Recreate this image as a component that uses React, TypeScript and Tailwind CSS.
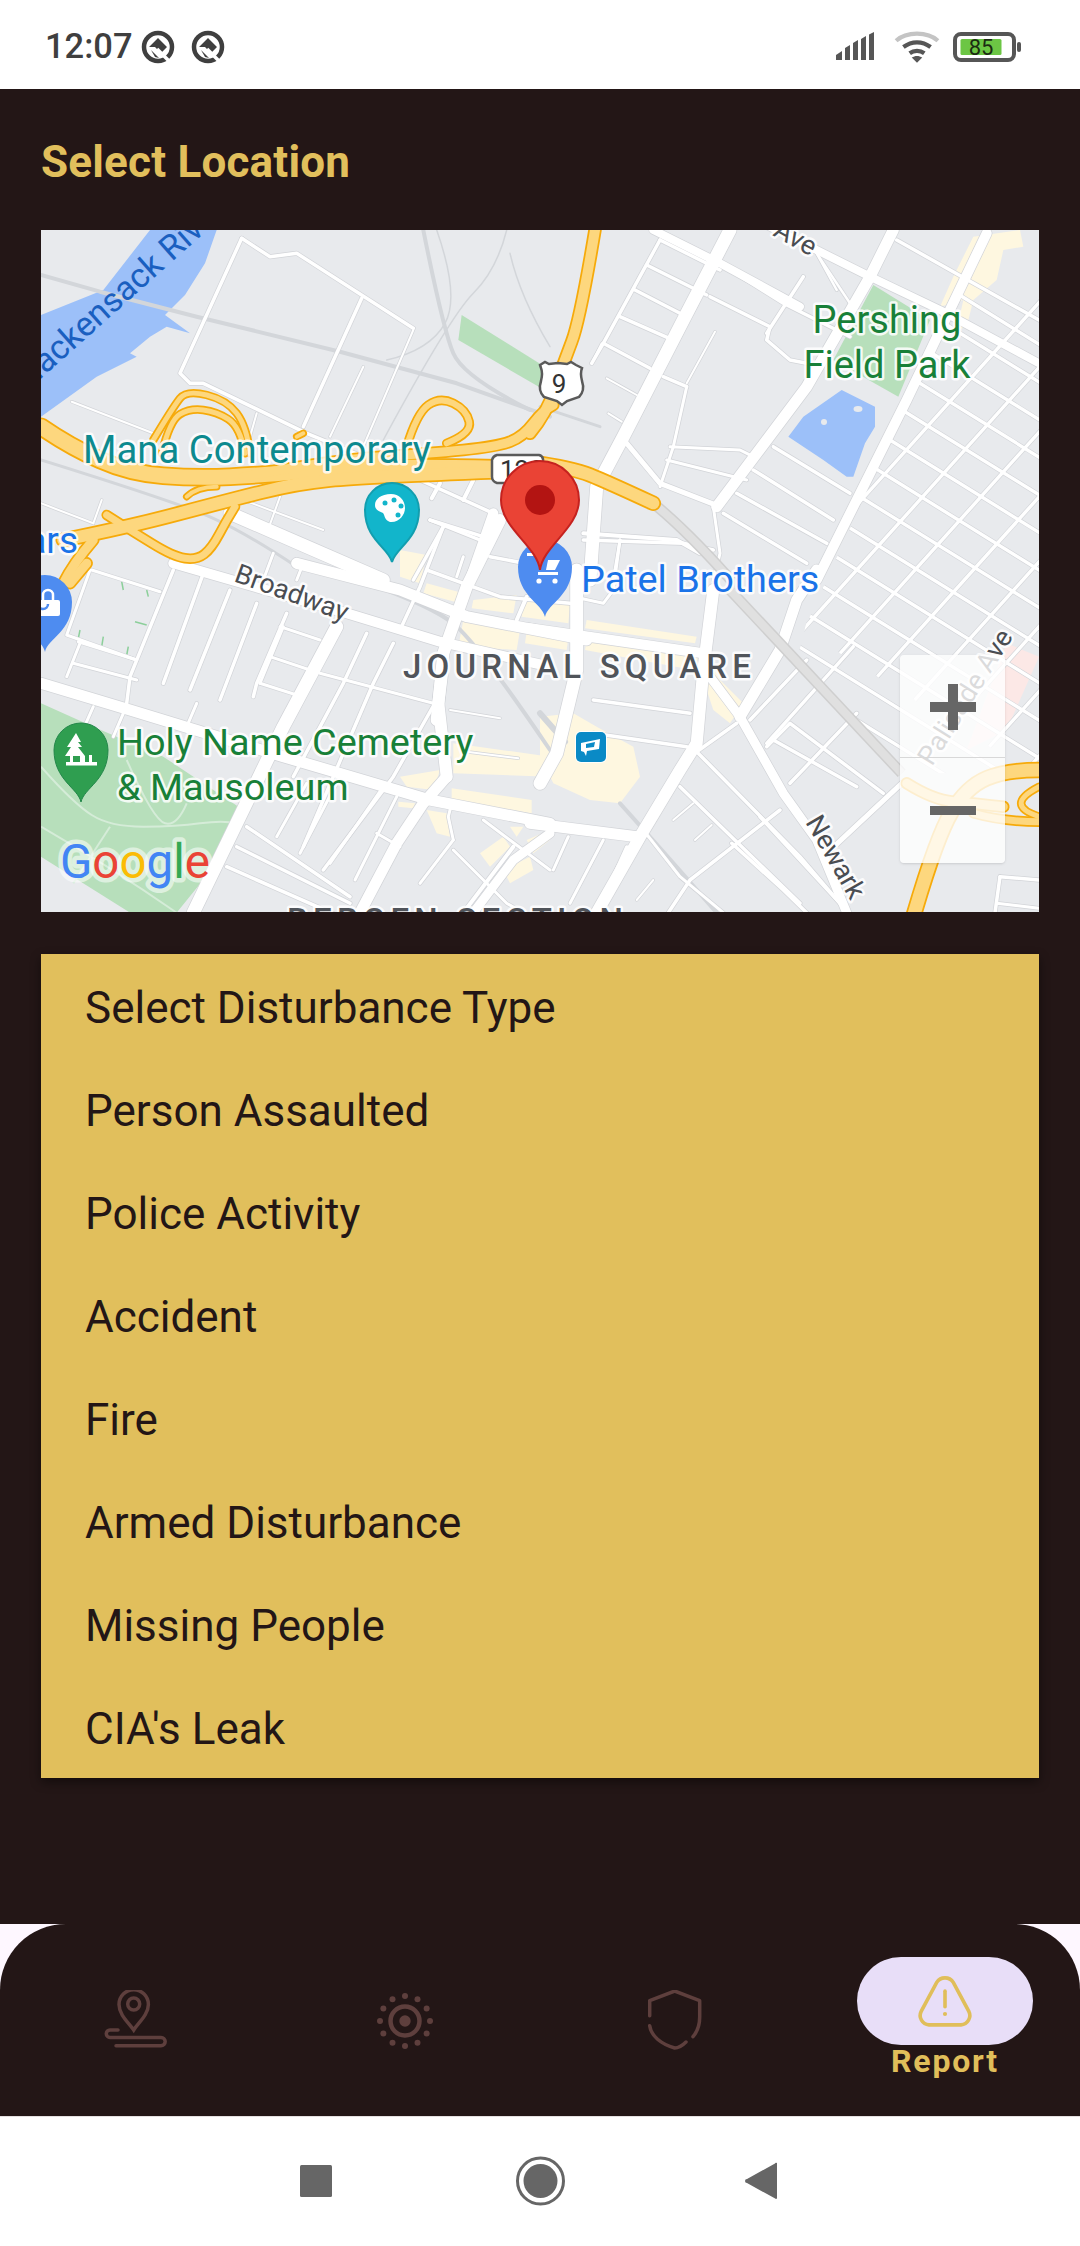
import React from "react";

type Crop = 2 | 3 | 4 | 5 | 7;
const O: Record<Crop, [number, number]> = { 2: [30, 220], 3: [540, 220], 4: [30, 570], 5: [540, 570], 7: [400, 420] };
const map = (c: Crop, a: number[]) => {
  const out: [number, number][] = [];
  for (let i = 0; i < a.length; i += 2) out.push([O[c][0] + a[i] / 3, O[c][1] + a[i + 1] / 3]);
  return out;
};
const L = (c: Crop, a: number[]) => map(c, a).map((p, i) => `${i ? "L" : "M"}${p[0].toFixed(1)} ${p[1].toFixed(1)}`).join("");
const S = (c: Crop, a: number[]) => {
  const p = map(c, a);
  if (p.length < 3) return L(c, a);
  let d = `M${p[0][0].toFixed(1)} ${p[0][1].toFixed(1)}`;
  for (let i = 1; i < p.length - 1; i++) {
    const e = i === p.length - 2 ? p[i + 1] : [(p[i][0] + p[i + 1][0]) / 2, (p[i][1] + p[i + 1][1]) / 2];
    d += `Q${p[i][0].toFixed(1)} ${p[i][1].toFixed(1)} ${e[0].toFixed(1)} ${e[1].toFixed(1)}`;
  }
  return d;
};
const Poly = (c: Crop, a: number[]) => map(c, a).map((p) => p.join(",")).join(" ");

const streets: [Crop, number, number[]][] = [
  // crop 2
  [2, 3.5, [635, 55, 720, 110, 800, 100, 1150, 325]],
  [2, 3.5, [635, 55, 450, 460, 480, 490, 520, 490, 830, 640, 1170, 780, 1390, 880]],
  [2, 3.5, [995, 235, 820, 620]],
  [2, 2, [125, 545, 370, 640]],
  [2, 2, [1000, 440, 900, 650]],
  [2, 2, [1150, 330, 1000, 680]],
  [2, 2, [33, 850, 190, 910]],
  [2, 2, [215, 840, 190, 910]],
  [2, 2, [680, 580, 660, 650]],
  [2, 2, [880, 930, 640, 840]],
  [2, 2, [750, 830, 710, 940]],
  [2, 13, [600, 880, 830, 980, 1060, 1080]],
  [2, 10, [1390, 880, 1320, 1080]],
  [2, 3.5, [1200, 900, 1350, 960]],
  [2, 3.5, [1240, 920, 1150, 1080]],
  [2, 4, [1230, 790, 1205, 835]],
  [2, 4, [1330, 780, 1300, 840]],
  [2, 3, [730, 1000, 700, 1080]],
  [2, 3, [820, 1030, 800, 1080]],
  // crop 3
  [3, 13, [150, 1080, 170, 800, 250, 650, 430, 300, 570, 30]],
  [3, 11, [530, 860, 800, 500, 990, 170, 1060, 30]],
  [3, 10, [830, 1080, 1100, 540, 1340, 40]],
  [3, 3.5, [360, 60, 540, 150]],
  [3, 3.5, [320, 135, 500, 225]],
  [3, 3.5, [285, 210, 430, 285]],
  [3, 3.5, [240, 290, 410, 365]],
  [3, 3.5, [190, 370, 330, 445]],
  [3, 3.5, [360, 60, 190, 370, 155, 430]],
  [3, 3.5, [510, 230, 690, 320, 680, 360, 750, 420, 800, 430]],
  [3, 3.5, [790, 170, 680, 340]],
  [3, 3.5, [555, 140, 730, 250, 930, 350]],
  [3, 8, [340, 30, 540, 130, 780, 260]],
  [3, 8, [650, 0, 990, 170, 1200, 270, 1497, 430]],
  [3, 2.5, [830, 100, 930, 250]],
  [3, 2.5, [830, 100, 890, 210]],
  [3, 3.5, [1070, 60, 1497, 300]],
  [3, 3.5, [370, 470, 440, 500]],
  [3, 3, [440, 500, 400, 680, 360, 800]],
  [3, 5, [260, 670, 360, 790, 540, 860]],
  [3, 3, [390, 680, 600, 690, 640, 710]],
  [3, 3, [380, 720, 620, 780]],
  [3, 2, [200, 475, 290, 525]],
  [3, 2, [205, 580, 245, 605]],
  [3, 2, [525, 335, 440, 490]],
  [3, 2, [155, 430, 185, 370]],
  [3, 3.5, [700, 680, 930, 820]],
  [3, 3.5, [640, 750, 880, 900]],
  [3, 3.5, [590, 820, 860, 970]],
  [3, 3.5, [550, 880, 800, 1030]],
  [3, 3.5, [130, 960, 430, 970, 520, 990]],
  [3, 3, [240, 960, 220, 1080]],
  [3, 3, [520, 860, 540, 1000, 520, 1080]],
  // crop 4
  [4, 11, [33, 340, 300, 420, 760, 560, 1200, 690, 1560, 760]],
  [4, 10, [430, -20, 950, 130, 1230, 215, 1560, 290]],
  [4, 11, [800, -20, 1110, 60, 1310, 140, 1670, 210]],
  [4, 13, [920, 170, 760, 470, 490, 1028]],
  [4, 3.5, [430, 0, 300, 320, 290, 400]],
  [4, 3.5, [520, 10, 400, 340]],
  [4, 3.5, [600, 60, 480, 360]],
  [4, 3.5, [680, 100, 570, 390]],
  [4, 3.5, [770, 130, 680, 340, 670, 380]],
  [4, 3.5, [1010, 190, 940, 340, 790, 620]],
  [4, 3.5, [1090, 220, 1030, 340, 820, 830]],
  [4, 3.5, [1220, 390, 1090, 620, 880, 900]],
  [4, 3, [180, 0, 110, 195, 320, 270]],
  [4, 3, [185, 0, 390, 65]],
  [4, 3, [145, 215, 320, 270]],
  [4, 3, [110, 320, 150, 220]],
  [4, 3, [130, 280, 320, 330]],
  [4, 3, [750, 170, 870, 210]],
  [4, 3, [720, 260, 840, 300]],
  [4, 3, [690, 340, 800, 375]],
  [4, 3, [870, 310, 1210, 400]],
  [4, 3, [760, 170, 690, 340]],
  [4, 3, [190, 410, 150, 500]],
  [4, 3, [500, 400, 470, 470]],
  [4, 3, [280, 430, 250, 500]],
  [4, 2, [1260, 420, 1410, 445]],
  [4, 2, [1310, 545, 1465, 565]],
  [4, 3.5, [650, 770, 960, 980]],
  [4, 3.5, [620, 830, 960, 1000]],
  [4, 3.5, [590, 890, 930, 1040]],
  [4, 3, [740, 800, 830, 640]],
  [4, 3, [810, 850, 930, 620]],
  [4, 3, [900, 880, 1060, 650]],
  [4, 3, [975, 930, 1100, 680]],
  [4, 3, [1040, 790, 1110, 830]],
  [4, 12, [1240, 280, 1225, 400, 1250, 620]],
  [4, 11, [1250, 620, 1180, 700, 1100, 820, 990, 1028]],
  [4, 3, [1265, 700, 1255, 740, 1270, 810]],
  [4, 3, [1270, 810, 1170, 940]],
  [4, 3, [1270, 840, 1430, 1000, 1480, 1028]],
  [4, 3, [1360, 750, 1560, 900]],
  [4, 4, [1450, 830, 1300, 1028]],
  [4, 9, [1560, 790, 1450, 870, 1330, 1028]],
  // crop 7
  [7, 12, [300, 300, 200, 500, 130, 700, 110, 900]],
  [7, 3.5, [130, 320, 60, 500, 0, 630]],
  [7, 3.5, [90, 300, 250, 350]],
  [7, 3.5, [80, 450, 300, 530, 510, 550]],
  [7, 3.5, [270, 410, 530, 460]],
  [7, 3, [190, 410, 170, 470]],
  [7, 4, [380, 530, 350, 600]],
  [7, 4, [550, 340, 830, 360, 900, 400]],
  [7, 3, [660, 360, 640, 510, 610, 550, 520, 530]],
  // crop 5
  [5, 12, [520, 60, 490, 300, 470, 520, 420, 600, 300, 800, 170, 1028]],
  [5, 13, [110, 0, 110, 300, 50, 550, 0, 640]],
  [5, 10, [-30, 175, 490, 250]],
  [5, 11, [-30, 760, 290, 800]],
  [5, 9, [510, 320, 600, 440, 730, 670, 830, 810, 920, 1028]],
  [5, 11, [830, 0, 770, 90, 720, 240, 600, 440]],
  [5, 3.5, [590, 460, 470, 545]],
  [5, 3.5, [160, 390, 450, 430]],
  [5, 3.5, [160, 490, 440, 530]],
  [5, 3.5, [470, 545, 780, 860, 900, 1000]],
  [5, 3.5, [420, 650, 780, 1000]],
  [5, 3.5, [680, 530, 750, 460, 1030, 670]],
  [5, 3.5, [630, 450, 800, 270]],
  [5, 3.5, [680, 520, 940, 230]],
  [5, 3.5, [750, 640, 950, 430]],
  [5, 3.5, [700, 510, 950, 650]],
  [5, 5, [860, 850, 1085, 640]],
  [5, 3, [85, 800, 40, 900]],
  [5, 3, [190, 810, 90, 1000]],
  [5, 3, [260, 830, 170, 1028]],
  [5, 2, [400, 750, 460, 700]],
  [5, 2, [465, 810, 515, 765]],
  [5, 2, [290, 990, 340, 930]],
  [5, 3, [310, 780, 420, 920, 550, 1028]],
  [5, 3.5, [385, 1028, 450, 930, 720, 720]],
  [5, 3.5, [575, 820, 730, 960, 800, 1028]],
  [5, 3.5, [660, 740, 900, 1000]],
  [5, 3.5, [1380, 920, 1497, 930]],
  [5, 3.5, [1380, 920, 1365, 1028]],
  [5, 3, [1370, 1000, 1497, 1015]],
];

const eastA: number[][] = [];
for (let k = 0; k < 19; k++) {
  const x = 1250 - k * 40;
  const y = 220 + k * 88;
  eastA.push([x, y, x + 1000, y + 620]);
}
const eastB: number[][] = [];
for (let k = -2; k < 12; k++) {
  const x = 900 + k * 112;
  const y = 1300 + k * 70;
  eastB.push([x, y, x + 900, y - 1000]);
}

const highways: [Crop, number, number[]][] = [
  [2, 15, [33, 620, 120, 680, 300, 760, 500, 775, 700, 765, 900, 745, 1200, 740, 1400, 745]],
  [2, 12, [100, 960, 300, 920, 600, 840, 800, 790, 1000, 770, 1400, 755]],
  [2, 9, [640, 770, 900, 720, 1200, 700, 1400, 680, 1480, 650, 1540, 570, 1570, 555]],
  [2, 5, [395, 700, 420, 600, 480, 565, 560, 575, 630, 620, 645, 700]],
  [2, 5, [370, 660, 430, 560, 470, 510, 590, 540, 650, 620, 660, 700]],
  [2, 6, [1130, 680, 1160, 580, 1230, 530, 1310, 570, 1325, 640, 1250, 670]],
  [3, 10, [165, 30, 120, 300, 70, 430, 20, 580, -30, 640]],
  [3, 12, [-30, 725, 100, 745, 200, 785, 340, 850]],
  [2, 7, [615, 860, 590, 900, 545, 985, 500, 1020, 430, 1010, 300, 930, 230, 885]],
  [2, 9, [190, 960, 130, 1030, 100, 1090]],
  [4, 9, [170, -20, 120, 40]],
  [2, 4, [470, 830, 500, 800, 560, 800]],
  [2, 4, [800, 650, 820, 640]],
  [5, 13, [1497, 600, 1400, 600, 1280, 650, 1190, 800, 1120, 1040]],
  [5, 5, [1497, 650, 1390, 705, 1497, 740]],
  [5, 7, [1497, 755, 1390, 755, 1300, 730]],
  [5, 9, [1100, 640, 1180, 690, 1300, 700, 1390, 710]],
];

const beige: [Crop, number[]][] = [
  [7, [0, 390, 80, 405, 60, 490, 0, 470]],
  [7, [80, 490, 190, 520, 180, 550, 70, 520]],
  [7, [220, 540, 350, 525, 340, 580, 215, 565]],
  [7, [370, 535, 510, 555, 505, 610, 365, 590]],
  [7, [190, 600, 360, 630, 350, 690, 175, 680]],
  [7, [380, 635, 505, 655, 500, 690, 375, 670]],
  [7, [560, 600, 890, 650, 885, 670, 555, 625]],
  [7, [560, 665, 900, 700, 880, 750, 555, 690]],
  [4, [1270, 520, 1560, 560, 1560, 620, 1270, 610]],
  [4, [1110, 620, 1230, 600, 1210, 660, 1130, 650]],
  [4, [1265, 655, 1505, 690, 1505, 730, 1265, 690]],
  [4, [1190, 720, 1250, 730, 1260, 800, 1220, 790]],
  [4, [1350, 850, 1420, 800, 1440, 830, 1380, 890]],
  [4, [1420, 900, 1500, 860, 1510, 900, 1440, 940]],
  [4, [1490, 810, 1560, 780, 1560, 810, 1510, 850]],
  [4, [1440, 770, 1480, 770, 1460, 800]],
  [4, [1105, 695, 1155, 700, 1150, 715, 1105, 710]],
  [5, [0, 440, 100, 430, 170, 470, 280, 530, 300, 620, 240, 700, 150, 690, 40, 640, 0, 560]],
  [5, [500, 230, 540, 330, 610, 400, 570, 460, 520, 420, 490, 330]],
  [3, [1300, 50, 1440, 30, 1450, 80, 1390, 90, 1370, 180, 1300, 240, 1280, 320, 1250, 330, 1270, 240, 1200, 260, 1240, 170]],
];

const ticks: number[][] = [
  [275, 35, 280, 60],
  [350, 60, 355, 80],
  [150, 180, 145, 205],
  [220, 200, 215, 230],
  [295, 230, 290, 255],
  [315, 155, 350, 165],
];

const roadPaths = streets.map(([c, w, a]) => ({ d: L(c, a), w }));

function GMap() {
  return (
    <svg viewBox="41 230 998 682" className="block w-full h-full">
      <defs>
        <clipPath id="east">
          <polygon points={Poly(3, [1340, 40, 1497, 40, 1497, 1660, 1085, 1660, 770, 1324, 830, 1080])} />
        </clipPath>
      </defs>
      <rect x="41" y="230" width="998" height="682" fill="#e8eaed" />
      <polygon points={Poly(2, [360, 30, 560, 30, 525, 130, 465, 225, 405, 285, 480, 340, 410, 320, 360, 350, 300, 400, 320, 410, 200, 470, 33, 590, 33, 285, 220, 210])} fill="#9cc0f9" />
      <polygon points={Poly(3, [905, 510, 1005, 560, 1005, 620, 975, 670, 940, 770, 920, 770, 850, 720, 745, 650, 790, 590])} fill="#9cc0f9" />
      <circle cx="824" cy="422" r="3" fill="#e8eaed" />
      <ellipse cx="858" cy="409" rx="4.5" ry="3" fill="#e8eaed" />
      <polygon points={Poly(2, [1295, 285, 1560, 450, 1560, 520, 1285, 360])} fill="#b7dfbb" />
      <polygon points={Poly(3, [1000, 195, 1170, 300, 1075, 530, 880, 420])} fill="#b7dfbb" />
      <polygon points={Poly(4, [33, 400, 190, 470, 400, 560, 640, 720, 560, 880, 440, 1028, 300, 1028, 33, 860])} fill="#b7dfbb" />
      <polygon points={Poly(5, [1400, 220, 1497, 260, 1400, 480, 1280, 540])} fill="#fce8e6" />
      {beige.map(([c, a], i) => (
        <polygon key={i} points={Poly(c, a)} fill="#fef7e0" />
      ))}
      <g stroke="#8ccf9a" strokeWidth="1.5">
        {ticks.map((t, i) => (
          <path key={i} d={L(4, t)} />
        ))}
      </g>

      {/* cemetery paths */}
      <g fill="none" stroke="#d5ecd8" strokeWidth="2">
        <path d={S(4, [33, 590, 130, 700, 240, 770, 440, 770, 580, 750, 620, 760])} />
        <path d={S(4, [33, 770, 240, 890, 440, 1028])} />
        <path d={S(4, [240, 770, 130, 940])} />
        <path d={S(4, [290, 570, 370, 750, 440, 770, 470, 700])} />
      </g>

      {/* rail and grey lines */}
      <g fill="none" stroke="#d3d6da" strokeLinecap="round" strokeLinejoin="round">
        <path d={L(2, [33, 165, 210, 215, 500, 290, 930, 395, 1280, 490, 1560, 590])} strokeWidth="4" />
        <path d={S(2, [1180, 30, 1240, 330, 1300, 470, 1500, 570])} strokeWidth="4" />
        <path d={S(2, [1430, 30, 1400, 150, 1260, 290, 1060, 660])} strokeWidth="1.5" />
        <path d={S(2, [1220, 30, 1290, 230, 1200, 390, 1070, 420])} strokeWidth="1.5" />
        <path d={S(2, [1440, 100, 1470, 230, 1560, 380])} strokeWidth="1.5" />
        <path d={S(2, [33, 720, 450, 850, 650, 940, 800, 1040])} strokeWidth="3" />
        <path d={S(4, [900, 0, 1200, 100, 1350, 230, 1560, 540])} strokeWidth="4" />
        <path d={S(5, [240, 700, 420, 900, 540, 1040])} strokeWidth="4" />
        <path d={S(5, [0, 430, 75, 515])} strokeWidth="6" />
        <path d={L(3, [0, 560, 180, 620])} strokeWidth="3" />
      </g>

      {/* roads: casing then fill */}
      <g clipPath="url(#east)" fill="none" stroke="#d2d4d8" strokeWidth="4.6">
        {eastA.concat(eastB).map((a, i) => (
          <path key={i} d={L(3, a)} />
        ))}
      </g>
      <g fill="none" stroke="#d2d4d8" strokeLinecap="round" strokeLinejoin="round">
        {roadPaths.map((r, i) => (
          <path key={i} d={r.d} strokeWidth={r.w + 1.4} />
        ))}
      </g>
      <g clipPath="url(#east)" fill="none" stroke="#ffffff" strokeWidth="3.4">
        {eastA.concat(eastB).map((a, i) => (
          <path key={i} d={L(3, a)} />
        ))}
      </g>
      <g fill="none" stroke="#ffffff" strokeLinecap="round" strokeLinejoin="round">
        {roadPaths.map((r, i) => (
          <path key={i} d={r.d} strokeWidth={r.w} />
        ))}
      </g>

      {/* grey elevated line */}
      <g fill="none" strokeLinecap="butt" strokeLinejoin="round">
        <path d={S(3, [340, 850, 450, 940, 590, 1100])} stroke="#cfcfcf" strokeWidth="11" />
        <path d={L(5, [570, 60, 1085, 610])} stroke="#cfcfcf" strokeWidth="11" />
        <path d={S(3, [340, 850, 450, 940, 590, 1100])} stroke="#e0e0e0" strokeWidth="8" />
        <path d={L(5, [570, 60, 1085, 610])} stroke="#e0e0e0" strokeWidth="8" />
      </g>

      {/* highways */}
      <g fill="none" stroke="#f6aa0a" strokeLinecap="round" strokeLinejoin="round">
        {highways.map(([c, w, a], i) => (
          <path key={i} d={S(c, a)} strokeWidth={w + 3.5} />
        ))}
      </g>
      <g fill="none" stroke="#fdd77e" strokeLinecap="round" strokeLinejoin="round">
        {highways.map(([c, w, a], i) => (
          <path key={i} d={S(c, a)} strokeWidth={w} />
        ))}
      </g>

      {/* labels */}
      <g paintOrder="stroke" stroke="#ffffff" strokeOpacity="0.85" strokeWidth="5" strokeLinejoin="round">
        <text transform="rotate(-41.7 45 375)" x="21" y="375" fontSize="34" fill="#1a5fc0" stroke="none">Hackensack River</text>
        <text x="83" y="463" fontSize="38.3" fill="#0d8a8f">Mana Contemporary</text>
        <text x="78" y="553" textAnchor="end" fontSize="37" fill="#1a73e8">ars</text>
        <text x="887" y="333" textAnchor="middle" fontSize="38" fill="#188038">Pershing</text>
        <text x="887" y="378" textAnchor="middle" fontSize="38" fill="#188038">Field Park</text>
        <text x="117" y="755" fontSize="37.8" fill="#188038">Holy Name Cemetery</text>
        <text x="117" y="800" fontSize="37.8" fill="#188038">&amp; Mausoleum</text>
        <text x="581" y="592" fontSize="37.8" fill="#1a73e8">Patel Brothers</text>
        <text x="403" y="678" fontSize="33" fontWeight="500" letterSpacing="5.2" fill="#50545a">JOURNAL SQUARE</text>
        <text x="287" y="932" fontSize="33" fontWeight="500" letterSpacing="5.2" fill="#50545a">BERGEN SECTION</text>
        <text transform="rotate(20 233 581)" x="233" y="581" fontSize="27" fill="#4a4d52">Broadway</text>
        <text transform="rotate(29 772 235)" x="772" y="235" fontSize="27" fill="#4a4d52">Ave</text>
        <text transform="rotate(-58 932 767)" x="932" y="767" fontSize="27" fill="#4a4d52">Palisade Ave</text>
        <text transform="rotate(60 805 822)" x="805" y="822" fontSize="27" fill="#4a4d52">Newark</text>
      </g>

      {/* shields */}
      <path d="M497 455h42a5 5 0 0 1 4 4v18a6 6 0 0 1-5 6h-41a7 7 0 0 1-5-7v-16a7 7 0 0 1 5-5z" fill="#fff" stroke="#5a5a5a" strokeWidth="2.5" />
      <text x="500" y="479" fontSize="26" fill="#333">120</text>
      <path d="M540 365l5-3 4 2 9-1 9 1 4-2 5 3 6 3c-2 5-1 9 0 13 2 6 1 12-3 16l-12 4-5 4-5-4-13-4c-4-4-5-10-3-16 1-4 2-8 0-13z" fill="#fff" stroke="#5a5a5a" strokeWidth="2.5" />
      <text x="559" y="393" textAnchor="middle" fontSize="26" fill="#333">9</text>

      {/* teal pin */}
      <path d="M392 562c-3-14-27-22-27-52a27 27 0 0 1 54 0c0 30-24 38-27 52z" fill="#12b5cb" stroke="#129eaf" strokeWidth="2" />
      <path d="M391 494c-10 0-16 5-16 11 0 5 4 6 8 8 2 2 1 7 7 9 9 1 15-7 15-14 0-8-6-14-14-14z" fill="#fff" />
      <circle cx="385" cy="503" r="2.5" fill="#12b5cb" />
      <circle cx="394" cy="500" r="2.5" fill="#12b5cb" />
      <circle cx="401" cy="506" r="2.5" fill="#12b5cb" />
      <circle cx="398" cy="515" r="2.5" fill="#12b5cb" />

      {/* blue left pin */}
      <path d="M45 652c-3-14-27-20-27-50a27 27 0 0 1 54 0c0 30-24 36-27 50z" fill="#4e8cf0" />
      <rect x="38" y="600" width="22" height="16" rx="2" fill="#fff" />
      <path d="M43 600v-5a5 5 0 0 1 10 0v5" fill="none" stroke="#fff" strokeWidth="2.5" />
      <path d="M38 604a5 5 0 0 0 10 0" fill="none" stroke="#4e8cf0" strokeWidth="2.5" />

      {/* green pin */}
      <path d="M81 802c-3-14-27-22-27-52a27 27 0 0 1 54 0c0 30-24 38-27 52z" fill="#2f9e50" stroke="#23874a" strokeWidth="1" />
      <path d="M76 733l-9 14h4l-6 9h7l0 0h8v6h5v-6h0l-7-9h4l-4-5 3-0z" fill="#fff" />
      <rect x="66" y="762" width="31" height="3.5" fill="#fff" />
      <rect x="70" y="756" width="3" height="7" fill="#fff" />
      <rect x="89" y="755" width="3" height="8" fill="#fff" />

      {/* transit */}
      <rect x="575" y="731" width="32" height="32" rx="6" fill="#fff" opacity="0.9" />
      <rect x="576" y="732" width="30" height="30" rx="5" fill="#0a8ac6" />
      <path d="M581 743l19-4-1 10-12 2-1 5-2-4-3-1z" fill="#fff" />
      <path d="M586 744l9-2-1 5-8 1z" fill="#0a8ac6" />

      {/* blue store pin */}
      <path d="M545 617c-3-14-27-21-27-50a27 27 0 0 1 54 0c0 29-24 36-27 50z" fill="#4e8cf0" />
      <polygon points="548,560 560,560 555,570 546,570" fill="#fff" />
      <rect x="538" y="572" width="20" height="3" fill="#fff" />
      <circle cx="539" cy="581" r="2.6" fill="#fff" />
      <circle cx="555" cy="581" r="2.6" fill="#fff" />
      <rect x="527" y="553" width="11" height="3" fill="#fff" />

      {/* red pin */}
      <path d="M540 570c-3-24-39-42-39-70a39 39 0 0 1 78 0c0 28-36 46-39 70z" fill="#ea4335" stroke="#c5221f" strokeWidth="2" />
      <circle cx="540" cy="500" r="15" fill="#b31412" />

      {/* google */}
      <text x="60" y="878" fontSize="47.500" fontWeight="400" paintOrder="stroke" stroke="#ffffff" strokeOpacity="0.55" strokeWidth="9" strokeLinejoin="round">
        <tspan fill="#4285f4">G</tspan>
        <tspan fill="#ea4335">o</tspan>
        <tspan fill="#fbbc05">o</tspan>
        <tspan fill="#4285f4">g</tspan>
        <tspan fill="#34a853">l</tspan>
        <tspan fill="#ea4335">e</tspan>
      </text>
    </svg>
  );
}

function QIcon() {
  return (
    <svg viewBox="-17 -17 34 34" className="w-[34px] h-[34px]">
      <circle r="14" fill="none" stroke="#3f3f3f" strokeWidth="4.5" />
      <polygon points="-9,0 0,-9 9,0 3,6 -3,0" fill="#3f3f3f" />
      <polygon points="-7,3 -2,8 1,11 -3,10" fill="#3f3f3f" />
      <path d="M-1 2L16 19" stroke="#fff" strokeWidth="3.5" />
    </svg>
  );
}

function StatusBar() {
  return (
    <div className="h-[89px] bg-white flex items-center justify-between pl-[45px] pr-[58px] pt-[4px]">
      <div className="flex items-center">
        <span className="text-[34.500px] font-medium text-[#3f3f3f] w-[96px] leading-none">12:07</span>
        <QIcon />
        <span className="w-[16px]" />
        <QIcon />
      </div>
      <div className="flex items-center">
        <svg viewBox="0 0 40 30" className="w-[40px] h-[30px] mr-[18px]">
          <path d="M0 28v-5l6-4v9z M9 28V16l5-3v15z M17 28V11l5-3v20z M25 28V7l5-3v24z M33 28V2.500l5-2.500v28z" fill="#565656" />
        </svg>
        <svg viewBox="0 0 44 32" className="w-[46px] h-[34px] mr-[13px]">
          <path d="M2 10C12 1 32 1 42 10" fill="none" stroke="#c4c4c4" strokeWidth="4" />
          <path d="M9 16c8-6 18-6 26 0" fill="none" stroke="#565656" strokeWidth="4" />
          <path d="M15 22c4-3 10-3 14 0" fill="none" stroke="#565656" strokeWidth="4" />
          <path d="M22 31l-5-5c3-2 7-2 10 0z" fill="#565656" />
        </svg>
        <svg viewBox="0 0 69 30" className="w-[69px] h-[30px]">
          <rect x="2" y="2" width="59" height="26" rx="6" fill="none" stroke="#565656" strokeWidth="4" />
          <rect x="7.500" y="7" width="41" height="16" rx="1.500" fill="#6cc644" />
          <rect x="64" y="10" width="4" height="10" rx="2" fill="#565656" />
          <text x="28" y="23" textAnchor="middle" fontSize="22" fill="#1b2b12">85</text>
        </svg>
      </div>
    </div>
  );
}

const options = ["Select Disturbance Type", "Person Assaulted", "Police Activity", "Accident", "Fire", "Armed Disturbance", "Missing People", "CIA's Leak"];

function NavBar() {
  const c = "#5e3f3d";
  return (
    <div className="bg-[#fef7ff]">
      <div className="h-[193px] rounded-t-[66px] bg-[#231616] grid grid-cols-4 border-b border-[#e4e0e0]">
        <div className="flex justify-center pt-[66px]">
          <svg viewBox="0 0 64 58" className="w-[64px] h-[58px]" fill="none" stroke={c} strokeWidth="3.500">
            <circle cx="30.700" cy="14" r="6" />
            <path d="M30.700 40C26 33 16 25 16 14.500A14.700 14.700 0 0 1 45.400 14.500C45.400 25 35 33 30.700 40Z" />
            <path d="M15 40H7a3.700 3.700 0 0 0 0 7.400H58a4.200 4.200 0 0 1 0 8.400H13" strokeLinecap="round" />
          </svg>
        </div>
        <div className="flex justify-center pt-[69px]">
          <svg viewBox="-28 -28 56 56" className="w-[56px] h-[56px]" fill={c}>
            <circle r="14.500" fill="none" stroke={c} strokeWidth="4.500" />
            <circle r="5.700" />
            {[0, 30, 60, 90, 120, 150, 180, 210, 240, 270, 300, 330].map((a) => (
              <circle key={a} cx={25 * Math.cos((a * Math.PI) / 180)} cy={25 * Math.sin((a * Math.PI) / 180)} r="3" />
            ))}
          </svg>
        </div>
        <div className="flex justify-center pt-[66px]">
          <svg viewBox="0 0 54 60" className="w-[54px] h-[60px]" fill="none" stroke={c} strokeWidth="3.500" strokeLinecap="round" strokeLinejoin="round">
            <path d="M1.700 25.700V10.700L26.700 1L51.700 10.700V27C51.700 35 49 42 45 46.700" />
            <path d="M38 52C34 56 30 58 26.700 58C13 54 3 46 1.700 35.700" />
          </svg>
        </div>
        <div className="flex flex-col items-center pt-[33px]">
          <div className="w-[176px] h-[88px] rounded-full bg-[#e8def8] flex items-center justify-center">
            <svg viewBox="0 0 56 52" className="w-[58px] h-[54px]" fill="none" stroke="#e0be5a" strokeWidth="3.500">
              <path d="M20 8a9.500 9.500 0 0 1 16 0L51 36a9 9 0 0 1-7.500 13H12.500a9 9 0 0 1-7.500-13Z" />
              <path d="M28 16.500V31.500" strokeLinecap="round" />
              <circle cx="28" cy="38.500" r="2" fill="#e0be5a" stroke="none" />
            </svg>
          </div>
          <span className="text-[32px] leading-[32px] font-bold tracking-[1.800px] text-[#e0be5a]">Report</span>
        </div>
      </div>
    </div>
  );
}

function SystemNav() {
  return (
    <div className="h-[129px] bg-white flex items-center justify-center">
      <svg viewBox="300 2117 480 129" className="w-[480px] h-[129px]" fill="#666666">
        <rect x="300" y="2165" width="32" height="32" rx="1.500" />
        <circle cx="540.500" cy="2181" r="23" fill="none" stroke="#666666" strokeWidth="3" />
        <circle cx="540.500" cy="2181" r="17" />
        <path d="M777 2164v34a1 1 0 0 1-1.800 .6L747 2183a2 2 0 0 1 0-4l28-15.600a1 1 0 0 1 2 .6z" />
      </svg>
    </div>
  );
}

export default function App() {
  return (
    <div className="w-[1080px] h-[2246px] flex flex-col overflow-hidden bg-white [font-family:Roboto,sans-serif]">
      <StatusBar />
      <main className="flex-1 bg-[#231616] px-[41px]">
        <h1 className="h-[141px] pt-[47px] text-[44px] leading-[52px] font-bold tracking-[0.2px] text-[#e1bf5c]">Select Location</h1>
        <div className="relative h-[682px] overflow-hidden">
          <GMap />
          <div className="absolute right-[34px] top-[425px] w-[105px] h-[208px] rounded-[4px] bg-white/80 shadow-sm flex flex-col">
            <div className="h-[103px] border-b border-[#d8d8d8] flex items-center justify-center">
              <svg viewBox="0 0 46 46" className="w-[46px] h-[46px] mt-[1px]"><path d="M18 0h10v18h18v10H28v18H18V28H0V18h18z" fill="#666666" /></svg>
            </div>
            <div className="flex-1 flex items-center justify-center">
              <div className="w-[46px] h-[9px] bg-[#666666]" />
            </div>
          </div>
        </div>
        <ul className="mt-[42px] h-[824px] bg-[#e1bf5c] pl-[44px] shadow-[0_4px_10px_rgba(0,0,0,0.45)]">
          {options.map((o) => (
            <li key={o} className="h-[103px] pt-[3px] leading-[103px] text-[44px] text-[#231616]">{o}</li>
          ))}
        </ul>
      </main>
      <NavBar />
      <SystemNav />
    </div>
  );
}
